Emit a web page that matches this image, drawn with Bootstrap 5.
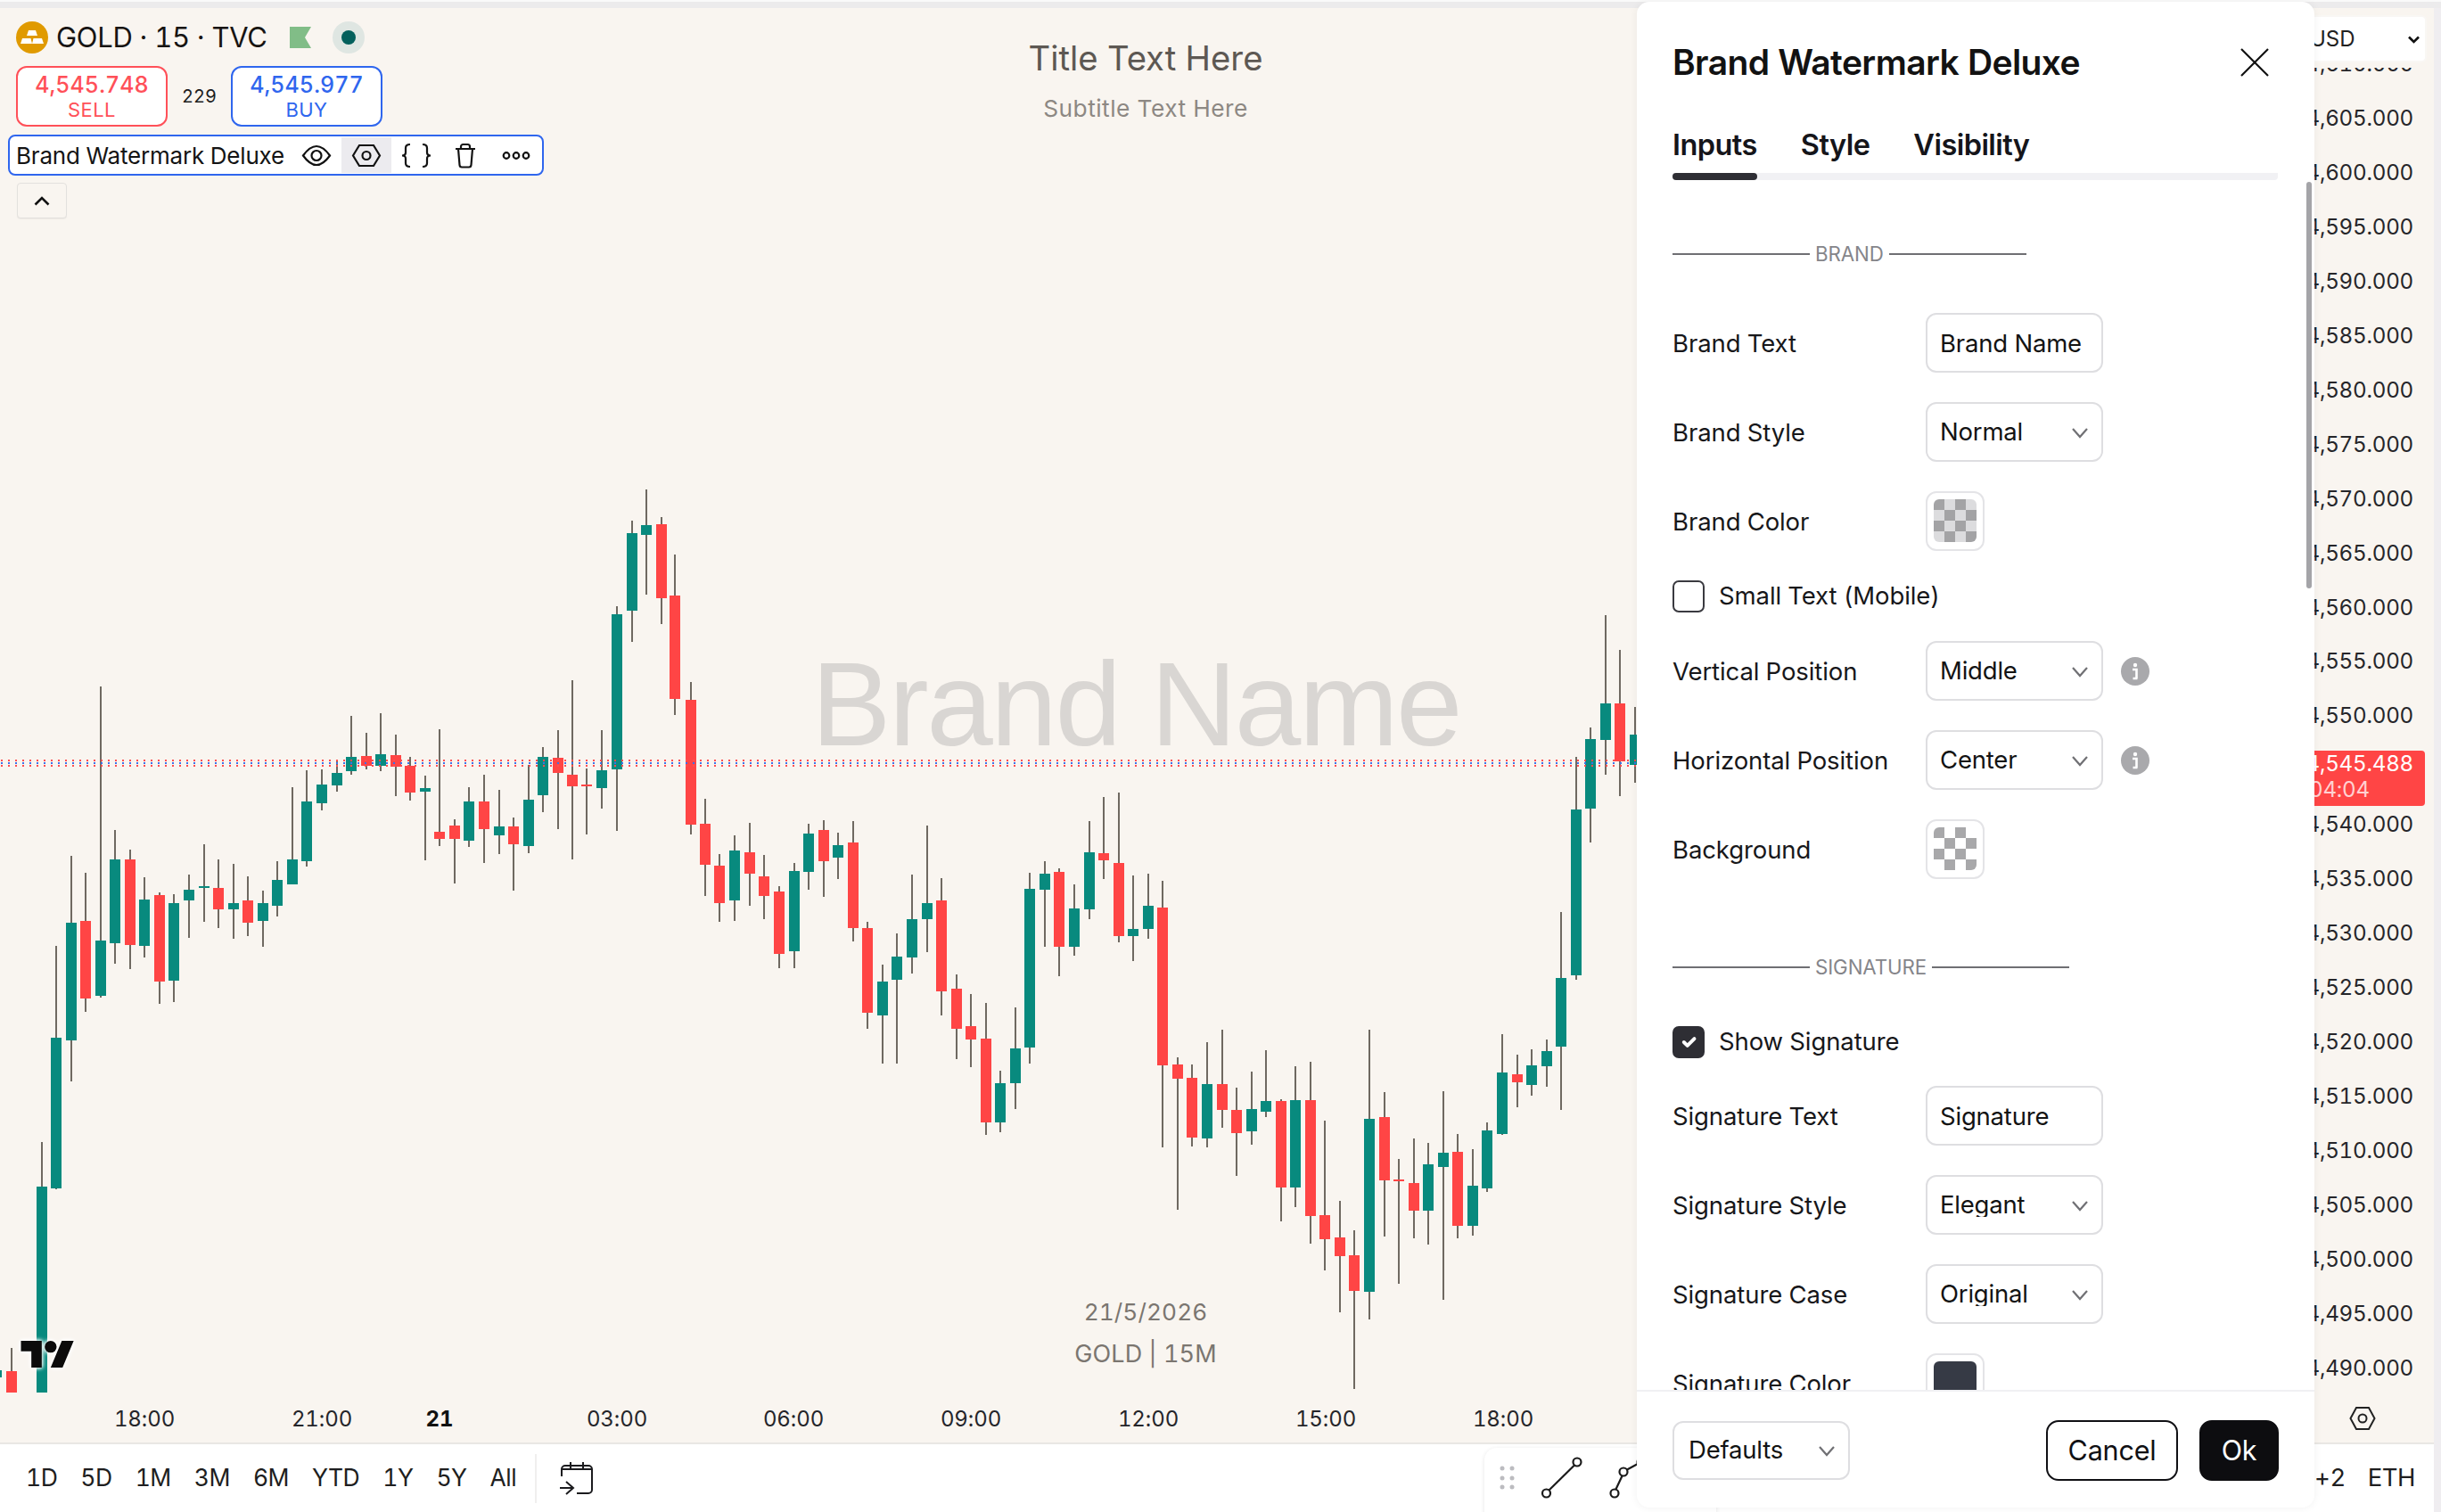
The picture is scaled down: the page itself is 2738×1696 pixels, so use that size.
<!DOCTYPE html>
<html lang="en">
<head>
<meta charset="utf-8">
<title>Brand Watermark Deluxe</title>
<link href="https://cdn.jsdelivr.net/npm/bootstrap@5.3.0/dist/css/bootstrap.min.css" rel="stylesheet">
<style>
html,body{margin:0;background:#fff;overflow:hidden}
body{font-family:Inter,"Liberation Sans",sans-serif;color:#131313;font-variant-numeric:tabular-nums}
.stage{position:relative;width:2738px;height:1696px;overflow:hidden;background:#efedf0}
.top-strip{height:9px;border-top:2px solid #fafafa;background:#ecebec}
.chart-box{flex:1 1 auto;background:#f9f5f0;margin-right:8px}
.bottom-bar{height:78px;margin-right:8px;background:#fff;border-top:2px solid #e9e7e4;padding-left:29px;font-size:26.5px;color:#1e1e20;letter-spacing:-.5px}
.range-list{gap:26px}
.bar-sep{width:2px;height:55px;background:#f0efee;margin-left:21px;margin-right:26px}
.bar-right{gap:25px;padding-right:21px;font-size:27.5px}
.chart-canvas{position:absolute;left:0;top:0;width:1836px;height:1618px}
.mark-text{position:absolute;left:910px;top:710px;width:725px;font:134px/1.2 "Liberation Sans",sans-serif;letter-spacing:-2.4px;color:#d9d6d3;white-space:nowrap}
.chart-title{position:absolute;left:985px;width:600px;text-align:center;white-space:nowrap}
.t-main{top:44px;font-size:38.3px;line-height:42px;color:#5d5853;letter-spacing:0}
.t-sub{top:104px;font-size:26.3px;line-height:36px;color:#8d8883;letter-spacing:.5px}
.t-date{top:1455px;font-size:26.2px;line-height:34px;color:#7b7670;letter-spacing:.1px}
.t-sym{top:1502px;font-size:27px;line-height:34px;color:#7b7670;letter-spacing:.1px}
.legend-line{position:absolute;left:18px;top:24px;height:36px}
.legend-name{font-size:31px;line-height:36px;margin-left:9px;color:#171412;letter-spacing:-.3px;white-space:nowrap}
.flag-icon{margin-left:25px}
.live-halo{width:36px;height:36px;border-radius:50%;background:#dfe6e2;margin-left:24px}
.live-dot{width:16px;height:16px;border-radius:50%;background:#04605c}
.order-line{position:absolute;left:18px;top:74px}
.order-box{width:170px;height:68px;background:#fff;border:2px solid;border-radius:12px;text-align:center}
.order-box.sell-box{color:#ff5058;border-color:#ff5058}
.order-box.buy-box{color:#2f66ee;border-color:#2f66ee}
.order-price{font-size:25px;line-height:28px;font-weight:500;margin-top:5px;letter-spacing:.1px}
.order-side{font-size:22px;line-height:28px;letter-spacing:.4px;font-weight:400}
.spread-val{width:71px;text-align:center;font-size:20px;color:#1d1d1d}
.study-line{position:absolute;left:9px;top:151px;width:601px;height:46px;background:#fff;border:2px solid #2f66ee;border-radius:8px}
.study-name{font-size:26px;line-height:44px;margin-left:7px;letter-spacing:-.2px;white-space:nowrap;color:#141414}
.study-btn{position:absolute;top:1px;height:40px;width:56px}
.study-btn.is-on{background:#ecebef}
.fold-btn{position:absolute;left:19px;top:205px;width:56px;height:40px;border:1px solid #e3e1de;border-radius:4px;background:#f9f5f0;box-shadow:0 1px 1px rgba(0,0,0,.05)}
.tv-logo{position:absolute;left:23px;top:1504px;filter:drop-shadow(0 0 2px #fff) drop-shadow(0 0 2px #fff)}
.price-axis{position:absolute;left:2490px;top:41px;width:217px;text-align:right;font-size:24.2px;color:#26262a;letter-spacing:-.25px}
.price-cell{height:60.96px;line-height:61px}
.currency-box{position:absolute;left:2560px;top:19px;width:160px;height:49px;background:#fff;border-radius:4px;font-size:24px;color:#222;box-shadow:0 0 0 2px #f9f7f4,0 8px 0 #f9f5f0}
.currency-box span{position:absolute;left:31px;top:9px;line-height:32px}
.currency-box svg{position:absolute;left:141px;top:21px}
.last-price{position:absolute;left:2540px;top:842px;width:180px;height:62px;background:#ff4545;border-radius:0 4px 4px 0;font-size:24.2px;line-height:30px;color:#fff;text-align:right;padding-right:13px;letter-spacing:-.25px}
.last-count{color:#ffd2d2;text-align:left;padding-left:50px;margin-top:-1px}
.axis-gear{position:absolute;left:2635px;top:1577px}
.tick-lbl{position:absolute;top:1575px;font-size:24px;line-height:34px;transform:translateX(-50%);color:#25252a;letter-spacing:-.1px;white-space:nowrap}
.tick-lbl.is-day{font-weight:700;color:#111}
.draw-bar{position:absolute;left:1665px;top:1624px;width:260px;height:80px;background:#fff;border-radius:14px 0 0 0;box-shadow:0 1px 5px rgba(0,0,0,.1)}
.draw-bar svg{display:block}
.dialog-box.modal-content{position:absolute;left:1836px;top:2px;width:760px;height:1689px;border:0;border-radius:14px;background:#fff;box-shadow:0 0 10px rgba(0,0,0,.06);overflow:hidden}
.dialog-box .modal-header{height:130px;border:0;padding:10px 51px 10px 40px;align-items:center;flex:none}
.dialog-title{font-size:39px;font-weight:600;color:#121212;letter-spacing:-.6px;margin:0;line-height:44px;position:relative;top:3px}
.close-x{border:0;background:none;padding:0;line-height:0;position:relative;top:3px}
.tab-strip{margin:0 41px 0 40px;gap:49px;position:relative;height:70px;flex:none;border-bottom:8px solid #f1f1f4;border-radius:0 0 4px 4px}
.tab-strip .nav-link{padding:0;color:#15151a;font-size:32.5px;font-weight:600;letter-spacing:-.55px;line-height:62px;height:62px;position:relative}
.tab-strip .nav-link.active::after{content:"";position:absolute;left:0;right:0;bottom:-8px;height:8px;border-radius:4px;background:#2e2e34}
.dialog-box .modal-body{flex:1 1 auto;overflow:hidden;padding:0 40px;position:relative;min-height:0}
.section-head{display:flex;align-items:center;height:24px;font-size:22.3px;color:#85858a;letter-spacing:-.1px;gap:6px}
.section-head::before,.section-head::after{content:"";width:154px;height:2px;background:#6f6f73}
.section-one{margin-top:71px;margin-bottom:54px}
.section-two{margin-top:87px;margin-bottom:54px}
.field-row{height:67px;margin-bottom:33px;font-size:27.5px;line-height:40px;color:#17171a;letter-spacing:-.1px}
.field-name{width:284px;flex:none}
.dialog-box .form-control,.dialog-box .form-select{width:199px;height:67px;border:2px solid #dedee1;border-radius:12px;font-size:27.5px;padding:0 14px;color:#131313;letter-spacing:-.2px;box-shadow:none;line-height:1;font-family:inherit}
.dialog-box .form-select{background-image:url("data:image/svg+xml,%3Csvg xmlns='http://www.w3.org/2000/svg' width='20' height='20' viewBox='0 0 20 20'%3E%3Cpath d='M2 6l8 9 8-9' fill='none' stroke='%23707074' stroke-width='2.2'/%3E%3C/svg%3E");background-position:right 14px center;background-size:20px 20px;background-color:#fff}
.swatch-frame{width:66px;height:67px;border:2px solid #e4e4e7;border-radius:12px;padding:7px;background:#fff}
.swatch-fill{display:block;width:48px;height:48px;border-radius:6px}
.fill-gray{background:repeating-conic-gradient(#dcdcde 0 25%,#a3a3a5 0 50%) 0 0/24px 24px}
.fill-white{background:repeating-conic-gradient(#fff 0 25%,#a8a8aa 0 50%) 0 0/24px 24px}
.fill-dark{background:#363a45}
.check-row{display:flex;align-items:center;padding:0;margin:0;min-height:0;height:36px;font-size:27.5px;color:#17171a;letter-spacing:-.1px;gap:16px}
.check-row .form-check-input{width:36px;height:36px;margin:0;float:none;border:2px solid #3a3a40;border-radius:7px;box-shadow:none;flex:none}
.check-row .form-check-input:checked{background-color:#2e2e34;border-color:#2e2e34;background-size:26px 26px}
.check-one{margin-bottom:32px}
.check-two{margin-bottom:31px}
.info-dot{width:32px;height:32px;margin-left:20px;flex:none}
.scroll-thumb{position:absolute;left:2587px;top:204px;width:6px;height:456px;border-radius:3px;background:#a4a4a8}
.dialog-box .modal-footer{height:132px;flex:none;border-top:2px solid #f0f0f3;padding:0 40px;justify-content:flex-start;align-items:flex-start}
.dialog-box .modal-footer>*{margin:0}
.footer-inner{width:100%;padding-top:33px}
.dialog-box .modal-footer .form-select{height:66px;padding-left:16px}
.footer-btn{height:68px;border-radius:14px;font-size:30.5px;line-height:1;padding:0;border-width:2.5px;letter-spacing:-.2px;margin-top:-1px}
.btn-cancel{width:148px;margin-right:24px;color:#101014;border-color:#101014;background:#fff}
.btn-ok{width:89px;background:#0d0d10;border-color:#0d0d10;color:#fff}
</style>
</head>
<body>
<div class="stage d-flex flex-column">
  <div class="top-strip"></div>
  <div class="chart-box"></div>
  <div class="bottom-bar d-flex align-items-center">
    <div class="range-list d-flex"><span>1D</span><span>5D</span><span>1M</span><span>3M</span><span>6M</span><span>YTD</span><span>1Y</span><span>5Y</span><span>All</span></div>
    <div class="bar-sep"></div>
    <svg width="38" height="38" viewBox="0 0 38 38" fill="none" stroke="#1b1b1e" stroke-width="2"><path d="M2 17V9a4 4 0 0 1 4-4h26a4 4 0 0 1 4 4v23a4 4 0 0 1-4 4H19M2 9h34M12 1v8M26 1v8M0 30h15M7 23l8 7-8 7"/></svg>
    <div class="bar-right d-flex ms-auto"><span>+2</span><span>ETH</span></div>
  </div>

  <svg class="chart-canvas" id="candles" width="1836" height="1618" viewBox="0 0 1836 1618"></svg>
  <div class="mark-text">Brand Name</div>
  <div class="chart-title t-main">Title Text Here</div>
  <div class="chart-title t-sub">Subtitle Text Here</div>
  <div class="chart-title t-date">21/5/2026</div>
  <div class="chart-title t-sym">GOLD | 15M</div>

  <div class="legend-line d-flex align-items-center">
    <svg width="36" height="36" viewBox="0 0 36 36"><circle cx="18" cy="18" r="18" fill="#e09a00"/><path d="M14 10h8l2 6H12zM7 19h9.500l1.500 6H5zM19.500 19H29l2 6H18z" fill="#fff"/></svg>
    <span class="legend-name">GOLD · 15 · TVC</span>
    <svg class="flag-icon" width="24" height="24" viewBox="0 0 24 24"><path d="M0 0h24l-7 12 7 12H0z" fill="#81bd87"/></svg>
    <span class="live-halo d-flex align-items-center justify-content-center"><span class="live-dot"></span></span>
  </div>
  <div class="order-line d-flex align-items-center">
    <div class="order-box sell-box"><div class="order-price">4,545.748</div><div class="order-side">SELL</div></div>
    <div class="spread-val">229</div>
    <div class="order-box buy-box"><div class="order-price">4,545.977</div><div class="order-side">BUY</div></div>
  </div>
  <div class="study-line">
    <div class="study-name">Brand Watermark Deluxe</div>
    <div class="study-btn is-on" style="left:372px"></div>
    <svg class="position-absolute top-0 start-0" width="597" height="42" viewBox="0 0 597 42" fill="none" stroke="#121212" stroke-width="2.2">
      <path d="M329 21.500c5-7 10-10.500 15-10.500s10 3.500 15 10.500c-5 7-10 10.500-15 10.500s-10-3.500-15-10.500z"/><circle cx="344" cy="21.500" r="5.500"/>
      <path d="M385 21.500l7-11.500h16l7 11.500-7 11.500h-16z"/><circle cx="400" cy="21.500" r="4.500"/>
      <path d="M449 9c-4 0-5 1.500-5 4v5c0 2-1 3.500-4 3.500 3 0 4 1.500 4 3.500v5c0 2.500 1 4 5 4M463 9c4 0 5 1.500 5 4v5c0 2 1 3.500 4 3.500-3 0-4 1.500-4 3.500v5c0 2.500-1 4-5 4"/>
      <path d="M500 14h22M506 14v-2.500c0-1.500 1-2.500 2.500-2.500h5c1.500 0 2.500 1 2.500 2.500V14M503 14l1.500 18c.1 1.500 1 2.500 2.500 2.500h8c1.500 0 2.400-1 2.500-2.500L519 14"/>
      <circle cx="557" cy="21.500" r="3.300"/><circle cx="568" cy="21.500" r="3.300"/><circle cx="579" cy="21.500" r="3.300"/>
    </svg>
  </div>
  <div class="fold-btn d-flex align-items-center justify-content-center"><svg width="18" height="11" viewBox="0 0 18 11" fill="none" stroke="#111" stroke-width="2.6"><path d="M1.500 9.500L9 2l7.500 7.500"/></svg></div>

  <svg class="tv-logo" width="61" height="30" viewBox="0 4 36 18"><path d="M14 22H7V11H0V4h14v18zM28 22h-8l7.500-18h8L28 22z" fill="#0c0b0b"/><circle cx="20" cy="8" r="4" fill="#0c0b0b"/></svg>

  <span class="tick-lbl" style="left:162px">18:00</span>
  <span class="tick-lbl" style="left:361px">21:00</span>
  <span class="tick-lbl is-day" style="left:493px">21</span>
  <span class="tick-lbl" style="left:692px">03:00</span>
  <span class="tick-lbl" style="left:890px">06:00</span>
  <span class="tick-lbl" style="left:1089px">09:00</span>
  <span class="tick-lbl" style="left:1288px">12:00</span>
  <span class="tick-lbl" style="left:1487px">15:00</span>
  <span class="tick-lbl" style="left:1686px">18:00</span>

  <div class="price-axis">
    <div class="price-cell">4,610.000</div><div class="price-cell">4,605.000</div><div class="price-cell">4,600.000</div><div class="price-cell">4,595.000</div><div class="price-cell">4,590.000</div><div class="price-cell">4,585.000</div><div class="price-cell">4,580.000</div><div class="price-cell">4,575.000</div><div class="price-cell">4,570.000</div><div class="price-cell">4,565.000</div><div class="price-cell">4,560.000</div><div class="price-cell">4,555.000</div><div class="price-cell">4,550.000</div><div class="price-cell"></div><div class="price-cell">4,540.000</div><div class="price-cell">4,535.000</div><div class="price-cell">4,530.000</div><div class="price-cell">4,525.000</div><div class="price-cell">4,520.000</div><div class="price-cell">4,515.000</div><div class="price-cell">4,510.000</div><div class="price-cell">4,505.000</div><div class="price-cell">4,500.000</div><div class="price-cell">4,495.000</div><div class="price-cell">4,490.000</div>
  </div>
  <div class="currency-box"><span>USD</span><svg width="13" height="9" viewBox="0 0 13 9" fill="none" stroke="#111" stroke-width="2.6"><path d="M1 1.500l5.500 5.500 5.500-5.500"/></svg></div>
  <div class="last-price"><div>4,545.488</div><div class="last-count">04:04</div></div>
  <svg class="axis-gear" width="30" height="28" viewBox="0 0 30 28" fill="none" stroke="#222" stroke-width="2"><path d="M1.500 14L8 2h14l6.500 12L22 26H8z"/><circle cx="15" cy="14" r="4.500"/></svg>

  <div class="draw-bar">
    <svg width="260" height="70" viewBox="0 0 260 70" fill="none" stroke="#1a1a1a" stroke-width="2.2">
      <g fill="#bcbcc0" stroke="none"><circle cx="20" cy="23" r="2.500"/><circle cx="31" cy="23" r="2.500"/><circle cx="20" cy="34" r="2.500"/><circle cx="31" cy="34" r="2.500"/><circle cx="20" cy="44" r="2.500"/><circle cx="31" cy="44" r="2.500"/></g>
      <circle cx="69.500" cy="51" r="4.500"/><circle cx="104" cy="16" r="4.500"/><path d="M72.500 47.500L101 19.500"/>
      <circle cx="146" cy="51" r="4.500"/><circle cx="156" cy="27" r="4.500"/><circle cx="176" cy="16" r="4.500"/><path d="M147.500 46.500L154.500 31.500M160 24.500L172 18"/>
    </svg>
  </div>

  <div class="modal-content dialog-box">
    <div class="modal-header">
      <h2 class="dialog-title">Brand Watermark Deluxe</h2>
      <button type="button" class="close-x ms-auto" aria-label="Close"><svg width="32" height="32" viewBox="0 0 32 32" fill="none" stroke="#111" stroke-width="2.2"><path d="M1 1l30 30M31 1L1 31"/></svg></button>
    </div>
    <ul class="nav tab-strip">
      <li class="nav-item"><a class="nav-link active" href="#">Inputs</a></li>
      <li class="nav-item"><a class="nav-link" href="#">Style</a></li>
      <li class="nav-item"><a class="nav-link" href="#">Visibility</a></li>
    </ul>
    <div class="modal-body">
      <div class="section-head section-one">BRAND</div>
      <div class="field-row d-flex align-items-center"><span class="field-name">Brand Text</span><input class="form-control" type="text" value="Brand Name"></div>
      <div class="field-row d-flex align-items-center"><span class="field-name">Brand Style</span><select class="form-select"><option>Normal</option></select></div>
      <div class="field-row d-flex align-items-center"><span class="field-name">Brand Color</span><span class="swatch-frame"><span class="swatch-fill fill-gray"></span></span></div>
      <div class="form-check check-row check-one"><input class="form-check-input" type="checkbox" id="c1"><label for="c1">Small Text (Mobile)</label></div>
      <div class="field-row d-flex align-items-center"><span class="field-name">Vertical Position</span><select class="form-select"><option>Middle</option></select>
        <svg class="info-dot" viewBox="0 0 32 32"><circle cx="16" cy="16" r="16" fill="#a9a9ac"/><circle cx="16" cy="9" r="2.200" fill="#fff"/><path d="M13 14h4.500v10M13.500 24h5" stroke="#fff" stroke-width="2.6" fill="none"/></svg></div>
      <div class="field-row d-flex align-items-center"><span class="field-name">Horizontal Position</span><select class="form-select"><option>Center</option></select>
        <svg class="info-dot" viewBox="0 0 32 32"><circle cx="16" cy="16" r="16" fill="#a9a9ac"/><circle cx="16" cy="9" r="2.200" fill="#fff"/><path d="M13 14h4.500v10M13.500 24h5" stroke="#fff" stroke-width="2.6" fill="none"/></svg></div>
      <div class="field-row d-flex align-items-center"><span class="field-name">Background</span><span class="swatch-frame"><span class="swatch-fill fill-white"></span></span></div>
      <div class="section-head section-two">SIGNATURE</div>
      <div class="form-check check-row check-two"><input class="form-check-input" type="checkbox" id="c2" checked><label for="c2">Show Signature</label></div>
      <div class="field-row d-flex align-items-center"><span class="field-name">Signature Text</span><input class="form-control" type="text" value="Signature"></div>
      <div class="field-row d-flex align-items-center"><span class="field-name">Signature Style</span><select class="form-select"><option>Elegant</option></select></div>
      <div class="field-row d-flex align-items-center"><span class="field-name">Signature Case</span><select class="form-select"><option>Original</option></select></div>
      <div class="field-row d-flex align-items-center"><span class="field-name">Signature Color</span><span class="swatch-frame"><span class="swatch-fill fill-dark"></span></span></div>
    </div>
    <div class="modal-footer">
      <div class="footer-inner d-flex align-items-start">
        <select class="form-select"><option>Defaults</option></select>
        <button type="button" class="btn footer-btn btn-cancel ms-auto">Cancel</button>
        <button type="button" class="btn footer-btn btn-ok">Ok</button>
      </div>
    </div>
  </div>
  <div class="scroll-thumb"></div>
</div>
<script>
(function(){
  var A=[[-6,6150,6170,6150,6170,'t'],[22,6085,6215,6152,6215,'r'],[80,5477,6215,5608,6215,'t'],[107,1368,5615,5168,5612,'t'],[136,1113,5296,1302,5175,'t'],[163,1161,5092,1297,1517,'r'],[192,632,1515,1353,1510,'t'],[220,1039,1418,1123,1361,'t'],[248,1095,1435,1123,1365,'r'],[276,1173,1400,1237,1368,'t'],[305,1216,5068,1224,1469,'r'],[332,1222,5062,1247,1467,'t'],[361,1166,1345,1209,1239,'t'],[390,1080,1301,1199,1204,'t'],[417,1123,1318,1204,1265,'r'],[446,1136,1348,1247,1265,'t'],[474,1171,1340,1239,1302,'r'],[502,1211,1371,1247,1297,'t'],[530,1128,1285,1181,1254,'t'],[559,918,1194,1123,1194,'t'],[586,870,1143,959,1128,'t'],[615,867,984,910,964,'t'],[644,840,931,878,913,'t'],[671,716,883,832,873,'t'],[700,764,867,830,858,'r'],[728,708,873,824,858,'t'],[757,769,943,827,860,'r'],[784,832,956,857,933,'r'],[813,885,1125,921,931,'t'],[840,754,1085,1044,1065,'r'],[869,1009,1191,1027,1065,'r'],[897,918,1087,959,1070,'t'],[925,883,1133,959,1037,'r'],[954,926,1108,1029,1055,'t'],[981,1004,1211,1029,1080,'r'],[1010,855,1105,953,1085,'t'],[1038,804,989,832,941,'t'],[1067,756,1037,835,878,'r'],[1094,615,1123,883,916,'r'],[1122,865,1052,910,916,'r'],[1150,756,979,870,921,'t'],[1179,405,1042,427,867,'t'],[1208,162,506,197,417,'t'],[1235,73,372,175,202,'t'],[1264,152,455,172,382,'r'],[1291,258,712,375,668,'r'],[1320,620,1052,670,1024,'r'],[1348,951,1227,1022,1138,'r'],[1376,1108,1300,1141,1247,'r'],[1404,1055,1297,1098,1239,'t'],[1433,1019,1254,1103,1163,'r'],[1460,1110,1292,1171,1227,'r'],[1489,1199,1431,1214,1391,'r'],[1518,1133,1431,1156,1383,'t'],[1546,1022,1209,1050,1158,'t']];
  var B=[[7,1012,1229,1039,1127,'r'],[34,1047,1179,1082,1118,'t'],[63,1014,1356,1075,1318,'r'],[90,1300,5141,1318,5095,'r'],[119,1421,5245,1469,5102,'t'],[147,1333,5245,1399,1464,'t'],[175,1166,1446,1292,1401,'t'],[204,1026,1386,1247,1292,'t'],[232,1176,5102,1239,1497,'r'],[261,1449,5232,5024,5141,'r'],[288,1505,5255,5134,5173,'r'],[317,5067,5455,5171,5418,'r'],[345,5266,5447,5303,5418,'t'],[373,5079,5379,5200,5303,'t'],[400,1161,5245,1206,5197,'t'],[430,1128,1371,1163,1209,'t'],[457,1149,1454,1158,1371,'r'],[486,1194,1396,1262,1371,'t'],[514,1014,1292,1103,1265,'t'],[542,947,1179,1105,1125,'r'],[571,933,1358,1133,1340,'r'],[598,1168,1411,1320,1340,'t'],[627,1163,1348,1254,1320,'t'],[654,1184,5492,1259,5250,'r'],[683,5226,5676,5248,5289,'r'],[711,5248,5489,5287,5463,'r'],[739,5182,5492,5305,5466,'t'],[768,5145,5435,5305,5381,'r'],[796,5316,5576,5381,5450,'r'],[825,5268,5484,5379,5445,'t'],[852,5205,5403,5355,5387,'t'],[881,5350,5710,5355,5610,'r'],[908,5253,5668,5353,5610,'t'],[937,5239,5776,5353,5695,'r'],[964,5413,5855,5692,5763,'r'],[993,5650,5980,5758,5813,'r'],[1021,5737,6205,5810,5916,'r'],[1050,5145,6000,5408,5918,'t'],[1079,5329,5755,5403,5589,'r'],[1106,5526,5894,5587,5592,'r'],[1135,5466,5760,5597,5679,'r'],[1162,5479,5779,5542,5679,'t'],[1191,5326,5942,5508,5550,'t'],[1218,5453,5760,5505,5723,'r'],[1247,5497,5752,5605,5723,'t'],[1275,5418,5624,5442,5613,'t'],[1304,5158,5455,5271,5453,'t'],[1333,5218,5374,5276,5300,'r'],[1360,5203,5339,5250,5308,'t'],[1389,5174,5313,5208,5253,'t'],[1416,1271,5381,1459,5195,'t'],[1445,832,1464,981,1451,'t'],[1472,749,1075,781,978,'t'],[1501,431,882,680,783,'t'],[1528,529,943,680,845,'r'],[1557,690,905,769,855,'t']];
  function Y(v){return v>=5000?1100+(v-5000)/2.631:520+v/2.529}
  var svg=document.getElementById('candles'),h='<g shape-rendering="crispEdges">';
  function add(c,off){
    var xc=(c[0]+off)/1.7043,wx=Math.round(xc-1),bx=Math.round(xc-6),t=Math.round(Y(c[1])),b=Math.round(Y(c[2])),bt=Math.round(Y(c[3])),bb=Math.round(Y(c[4]));
    h+='<rect x="'+wx+'" y="'+t+'" width="2" height="'+(b-t)+'" fill="#6f6961"/>';
    h+='<rect x="'+bx+'" y="'+bt+'" width="12" height="'+Math.max(bb-bt,2)+'" fill="'+(c[5]=='t'?'#088a7e':'#ff4545')+'"/>';
  }
  A.forEach(function(c){add(c,0)});B.forEach(function(c){add(c,1568)});
  h+='<path d="M1 853H1836M1 859H1836" stroke="#ff4d50" stroke-width="2" stroke-dasharray="2 6" fill="none"/><path d="M1 856H1836" stroke="#3f6fe8" stroke-width="2" stroke-dasharray="2 6" fill="none"/></g>';
  svg.innerHTML=h;
})();
</script>
<script src="https://cdn.jsdelivr.net/npm/bootstrap@5.3.0/dist/js/bootstrap.bundle.min.js"></script>
</body>
</html>
